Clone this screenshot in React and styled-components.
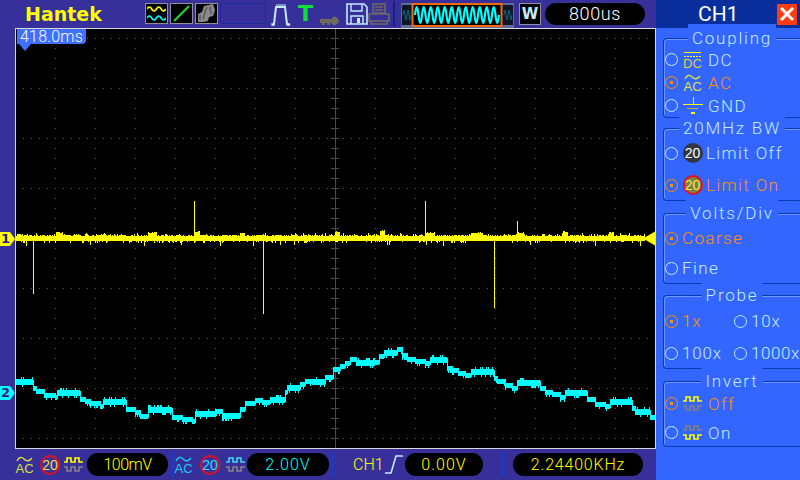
import styled, { createGlobalStyle } from "styled-components";

const YELLOW = "#ffff00";
const CYAN = "#00ffff";
const ORANGE = "#ff9000";
const LIGHT = "#c4ecff";

const GlobalStyle = createGlobalStyle`
  html, body { margin: 0; padding: 0; background: #000; }
  body { width: 800px; height: 480px; overflow: hidden; }
`;

// small seeded random so the noise stays the same on each run
const makeRand = (seed) => () => {
  seed = (seed * 1103515245 + 12345) & 0x7fffffff;
  return seed / 0x7fffffff;
};

const SPIKES = [
  [33, 240, 294],
  [194, 201, 237],
  [263, 240, 314],
  [425, 201, 237],
  [494, 240, 308],
  [517, 221, 237],
];
const BUMPS = [[56, 62, 232], [103, 105, 233], [148, 156, 232], [194, 199, 231], [240, 244, 232], [335, 339, 231], [380, 384, 230], [425, 434, 232], [471, 482, 232], [517, 523, 232], [563, 567, 231], [609, 613, 232]];

const yellowPath = () => {
  const rand = makeRand(7);
  let d = "";
  for (let x = 16; x < 645; x++) {
    let top = 235 + Math.floor(rand() * 2);
    let bottom = 241;
    const r = rand();
    if (r > 0.82) top -= 1 + Math.floor(rand() * 2);
    if (r < 0.22) bottom += 1 + Math.floor(rand() * 2);
    if (r < 0.03) bottom += 3;
    BUMPS.forEach(([a, b, y]) => {
      if (x >= a && x <= b) top = Math.min(top, y + Math.floor(rand() * 2));
    });
    d += `M${x} ${top}h1V${bottom}h-1z`;
  }
  return d;
};

const CYAN_STEPS = [
  [33, 382], [36, 388], [44, 391], [55, 395], [57, 397], [80, 393], [85, 399], [90, 401], [100, 403], [103, 406],
  [126, 402], [135, 409], [140, 412], [148, 416], [172, 410], [182, 417], [192, 419], [195, 421], [216, 414], [222, 411],
  [240, 416], [245, 409], [255, 403], [262, 400], [270, 402], [285, 400], [287, 392], [300, 388], [305, 384], [312, 381],
  [325, 382], [333, 377], [340, 369], [345, 366], [350, 363], [356, 359], [375, 363], [379, 362], [384, 356], [397, 353],
  [402, 349], [407, 355], [415, 359], [425, 361], [430, 363], [447, 360], [452, 368], [458, 370], [465, 373], [471, 375],
  [494, 372], [497, 378], [505, 381], [512, 385], [517, 388], [540, 383], [545, 388], [552, 392], [560, 394], [565, 397],
  [587, 393], [595, 399], [605, 404], [610, 406], [632, 402], [635, 408], [650, 412], [655, 417],
];

const cyanPath = () => {
  const rand = makeRand(21);
  let d = "";
  let from = 16;
  let prev = CYAN_STEPS[0][1];
  CYAN_STEPS.forEach(([end, y]) => {
    const wide = end - from > 12;
    for (let x = from; x < end; x++) {
      let top = y - (wide ? 3 : 2);
      let bottom = y + 3;
      const r = rand();
      if (wide && r > 0.8) top -= 2;
      if (r < 0.18) bottom += 2;
      // first column of a step joins up with the level before it
      if (x === from) {
        top = Math.min(top, prev - 2);
        bottom = Math.max(bottom, prev + 2);
      }
      d += `M${x} ${top}h1V${bottom}h-1z`;
    }
    from = end;
    prev = y;
  });
  return d;
};

const gridDots = () => {
  let d = "";
  for (let x = 55; x < 655; x += 40) {
    for (let y = 38; y < 448; y += 10) d += `M${x} ${y}h1v1h-1z`;
  }
  for (let y = 38; y < 448; y += 50) {
    for (let x = 23; x < 655; x += 8) d += `M${x} ${y}h1v1h-1z`;
  }
  return d;
};

const crossTicks = () => {
  let d = "M335 29V448";
  for (let y = 38; y < 448; y += 10) d += `M331 ${y}H339`;
  return d;
};

const Waveforms = () => (
  <svg width="639" height="419" viewBox="16 29 639 419" shapeRendering="crispEdges" style={{ display: "block" }}>
    <path d={gridDots()} fill="#555" />
    <path d={crossTicks()} stroke="#4a4a4a" strokeWidth="1" fill="none" />
    <path d={yellowPath()} fill={YELLOW} />
    {SPIKES.map(([x, y1, y2]) => (
      <rect key={x} x={x} y={y1} width="1" height={y2 - y1} fill={YELLOW} />
    ))}
    <path d={cyanPath()} fill={CYAN} />
    <polygon points="643,238.5 655,231.5 655,245.5" fill={YELLOW} shapeRendering="auto" />
  </svg>
);

const WaveTile = () => (
  <svg width="19" height="17" viewBox="0 0 19 17">
    <path d="M0 4q2.4-4 4.7 0t4.7 0 4.7 0 4.7 0" stroke={YELLOW} strokeWidth="1.6" fill="none" />
    <path d="M0 13q2.4-4 4.7 0t4.7 0 4.7 0 4.7 0" stroke={CYAN} strokeWidth="1.6" fill="none" />
  </svg>
);

const XYTile = () => (
  <svg width="19" height="17" viewBox="0 0 19 17">
    <path d="M2 16L17 1" stroke="#12e030" strokeWidth="2" fill="none" />
  </svg>
);

const PersistTile = () => (
  <svg width="19" height="19" viewBox="0 0 19 19">
    <path d="M1 18V10l4-2 2-6 9-2 2 6-2 6-4 1-1 4-5 1z" fill="#8a8a8a" />
    <path d="M6 15l2-7 2-5M13 3l1 7M3 11v5" stroke="#5a5a5a" strokeWidth="1.5" fill="none" />
  </svg>
);

const PulseIcon = () => (
  <svg width="21" height="23" viewBox="0 0 21 23" fill="none">
    <path d="M1 22l2-1 2-17h9l2 17 3 1" stroke={LIGHT} strokeWidth="2" />
    <path d="M6 1v4M8 1v4M10 1v4M12 1v4M14 1v4M1 20v3M3 20v3M16 20v3M18 20v3" stroke={LIGHT} strokeWidth="1" />
  </svg>
);

const KeyIcon = () => (
  <svg width="22" height="10" viewBox="0 0 22 10" fill="#6f6a60">
    <path d="M0 3h12v-1a4 4 0 1 1 0 6v-1h-2v2h-3v-2h-2v2h-3v-2h-2z" />
  </svg>
);

const SaveIcon = () => (
  <svg width="22" height="22" viewBox="0 0 22 22" fill="none">
    <path d="M1 1h17l3 3v17H1z" stroke={LIGHT} strokeWidth="1.6" />
    <path d="M5 1v7h11V1" stroke={LIGHT} strokeWidth="1.4" />
    <path d="M5 21v-8h12v8" stroke={LIGHT} strokeWidth="1.4" />
    <rect x="11" y="15" width="3" height="5" fill={LIGHT} />
  </svg>
);

const PrintIcon = () => (
  <svg width="22" height="22" viewBox="0 0 22 22" fill="none" stroke="#6f6a60" strokeWidth="1.6">
    <path d="M5 1h12v9H5zM7 4h8M7 7h8" />
    <path d="M1 11h20v7H1zM3 18v3h16v-3" />
  </svg>
);

const zigzag = (x0, x1, h, step) => {
  let d = `M${x0} 11`;
  for (let x = x0; x < x1; x += step) {
    d += `q${step / 4} ${-h} ${step / 2} 0t${step / 2} 0`;
  }
  return d;
};

const TimeBar = () => (
  <svg width="113" height="26" viewBox="0 0 113 26" fill="none">
    <rect x="0.5" y="1.5" width="112" height="22" rx="2" fill="#0d1526" stroke="#5f6a98" />
    <rect y="0" x="0" width="113" height="2" fill="#5f6a98" />
    <rect y="22" x="0" width="113" height="3" fill="#5f6a98" />
    <path d={zigzag(2, 10, 10, 4)} stroke="#0d6a78" strokeWidth="1" transform="translate(0 1)" />
    <path d={zigzag(103, 111, 10, 4)} stroke="#0d6a78" strokeWidth="1" transform="translate(0 1)" />
    <rect x="11.5" y="1" width="89" height="22" fill="#000" stroke="#f26a10" strokeWidth="2" />
    <path d={zigzag(14, 98, 16, 7)} stroke={CYAN} strokeWidth="2.2" transform="translate(0 1)" />
  </svg>
);

const AcIcon = ({ color }) => (
  <IconStack>
    <svg width="17" height="7" viewBox="0 0 17 7" fill="none">
      <path d="M1 5q3-6 7-2t8-1" stroke={color} strokeWidth="1.4" />
    </svg>
    <IconLabel $color={color}>AC</IconLabel>
  </IconStack>
);

const DcIcon = () => (
  <IconStack>
    <svg width="17" height="7" viewBox="0 0 17 7" fill="none" shapeRendering="crispEdges">
      <path d="M0 1.5H17" stroke={YELLOW} />
      <path d="M0 5H17" stroke={YELLOW} strokeDasharray="2 1" />
    </svg>
    <IconLabel $color="#d8d040">DC</IconLabel>
  </IconStack>
);

const GndIcon = () => (
  <svg width="20" height="18" viewBox="0 0 20 18" fill="none" shapeRendering="crispEdges">
    <path d="M10 0V7M0 7.5H20" stroke={YELLOW} strokeWidth="1" />
    <path d="M4 11.5H15" stroke="#c8b040" />
    <rect x="8" y="15" width="4" height="2" fill={YELLOW} />
  </svg>
);

const SquareWave = ({ top, bottom }) => (
  <svg width="19" height="17" viewBox="0 0 19 17" fill="none" style={{ display: "block" }}>
    <path d="M0 6h3V2h4v4h4V2h4v4h4" stroke={top} strokeWidth="1.6" />
    <path d="M0 11h3v4h4v-4h4v4h4v-4h4" stroke={bottom} strokeWidth="1.6" />
  </svg>
);

const EdgeIcon = () => (
  <svg width="18" height="21" viewBox="0 0 18 21" fill="none" style={{ display: "block" }}>
    <path d="M0 19H6L11 2H18" stroke={LIGHT} strokeWidth="1.6" />
  </svg>
);

const CursorLabel = () => (
  <CursorTab>
    <CursorText>418.0ms</CursorText>
    <CursorPoint />
  </CursorTab>
);

const Radio = ({ selected, label, icon, gap, spacing }) => (
  <Option>
    <RadioDot $selected={selected} />
    {icon}
    <OptionText $selected={selected} $gap={gap} $spacing={spacing}>{label}</OptionText>
  </Option>
);

export default function App() {
  return (
    <Root>
      <GlobalStyle />
      <Main>
        <TopBar>
          <Logo>Hantek</Logo>
          <Tools>
            <Tile><WaveTile /></Tile>
            <Tile><XYTile /></Tile>
            <Tile><PersistTile /></Tile>
            <BlankFrame />
            <PulseSlot><PulseIcon /></PulseSlot>
            <TriggerT>T</TriggerT>
            <KeySlot><KeyIcon /></KeySlot>
            <SaveIcon />
            <PrintIcon />
            <Divider />
            <TimeSlot><TimeBar /></TimeSlot>
            <LetterTile>W</LetterTile>
            <Pill $width={100} $height={22} $size={18} $spacing={0.6} $color="#fff">800us</Pill>
          </Tools>
        </TopBar>
        <Middle>
          <Gutter>
            <ChannelTag $top={204} $color={YELLOW}>1</ChannelTag>
            <ChannelTag $top={358} $color={CYAN}>2</ChannelTag>
          </Gutter>
          <Screen>
            <Waveforms />
            <CursorLabel />
          </Screen>
        </Middle>
        <BottomBar>
          <BarSlot $left={0}><AcIcon color="#d8e040" /></BarSlot>
          <BarSlot $left={7}><Badge $ring="#e01020" $fill="#3a2f9b" $color="#e8e050">20</Badge></BarSlot>
          <BarSlot $left={4}><SquareWave top={YELLOW} bottom="#8a8088" /></BarSlot>
          <BarSlot $left={4}><Pill $width={81} $height={23} $spacing={-0.5} $color={YELLOW}>100mV</Pill></BarSlot>
          <BarDivider $left={4} />
          <BarSlot $left={2}><AcIcon color="#20c8f0" /></BarSlot>
          <BarSlot $left={8}><Badge $ring="#e01020" $fill="#3a2f9b" $color="#20e0ff">20</Badge></BarSlot>
          <BarSlot $left={6}><SquareWave top="#40d8f0" bottom="#8a8088" /></BarSlot>
          <BarSlot $left={2}><Pill $width={82} $height={23} $color={CYAN}>2.00V</Pill></BarSlot>
          <BarDivider $left={3} />
          <ChannelName>CH1</ChannelName>
          <BarSlot $left={4}><EdgeIcon /></BarSlot>
          <BarSlot $left={2}><Pill $width={78} $height={23} $color={YELLOW}>0.00V</Pill></BarSlot>
          <BarDivider $left={19} />
          <BarSlot $left={10}><Pill $width={130} $height={23} $spacing={0.8} $color={YELLOW}>2.24400KHz</Pill></BarSlot>
        </BottomBar>
      </Main>
      <Panel>
        <PanelHeader>
          <PanelTitle>CH1</PanelTitle>
          <CloseBox>
            <svg width="14" height="14" viewBox="0 0 14 14">
              <path d="M1 1L13 13M13 1L1 13" stroke="#fff" strokeWidth="3" />
            </svg>
          </CloseBox>
        </PanelHeader>
        <Group $top={10} $height={80} $pad={9} $row={23}>
          <GroupTitle>Coupling</GroupTitle>
          <Radio label="DC" icon={<IconBox><DcIcon /></IconBox>} />
          <Radio selected label="AC" icon={<IconBox><AcIcon color="#e0e040" /></IconBox>} />
          <Radio label="GND" icon={<IconBox><GndIcon /></IconBox>} />
        </Group>
        <Group $top={10} $height={73} $pad={8} $row={32}>
          <GroupTitle>20MHz BW</GroupTitle>
          <Radio label="Limit Off" gap={3} icon={<IconBox><Badge $ring="#33363f" $fill="#33363f" $color="#fff">20</Badge></IconBox>} />
          <Radio selected label="Limit On" gap={3} icon={<IconBox><Badge $ring="#e01020" $fill="#808040" $color="#f0e850">20</Badge></IconBox>} />
        </Group>
        <Group $top={12} $height={71} $pad={9} $row={30}>
          <GroupTitle>Volts/Div</GroupTitle>
          <Radio selected label="Coarse" gap={4} />
          <Radio label="Fine" gap={4} />
        </Group>
        <Group $top={11} $height={74} $pad={9} $row={32}>
          <GroupTitle>Probe</GroupTitle>
          <ProbeGrid>
            <Radio selected label="1x" gap={4} spacing={0.8} />
            <Radio label="10x" gap={4} spacing={0.8} />
            <Radio label="100x" gap={4} spacing={0.8} />
            <Radio label="1000x" gap={4} spacing={0.6} />
          </ProbeGrid>
        </Group>
        <Group $top={12} $height={66} $pad={7} $row={29}>
          <GroupTitle>Invert</GroupTitle>
          <Radio selected label="Off" icon={<IconBox><SquareWave top={YELLOW} bottom="#8a8078" /></IconBox>} />
          <Radio label="On" icon={<IconBox><SquareWave top="#8a8078" bottom={YELLOW} /></IconBox>} />
        </Group>
      </Panel>
    </Root>
  );
}

const FONT = `Roboto, "Liberation Sans", sans-serif`;

const Root = styled.div`
  display: grid;
  grid-template-columns: 656px 144px;
  width: 800px;
  height: 480px;
  background: #38309a;
  font-family: ${FONT};
  font-weight: 300;
`;

const Main = styled.div`
  display: flex;
  flex-direction: column;
  height: 480px;
`;

const TopBar = styled.div`
  display: flex;
  align-items: flex-start;
  height: 28px;
  box-sizing: border-box;
  padding: 3px 8px 0 25px;
`;

const Logo = styled.div`
  width: 120px;
  height: 20px;
  font-family: "DejaVu Sans", sans-serif;
  font-weight: 700;
  font-size: 19px;
  line-height: 22px;
  color: ${YELLOW};
`;

const Tools = styled.div`
  display: flex;
  align-items: flex-start;
`;

const Tile = styled.div`
  display: flex;
  align-items: center;
  justify-content: center;
  width: 23px;
  height: 21px;
  margin-right: 2px;
  box-sizing: border-box;
  border: 1px solid #8f8f9e;
  background: #000;
`;

const BlankFrame = styled.div`
  width: 46px;
  height: 21px;
  box-sizing: border-box;
  border: 1px solid #1c2aa0;
  border-radius: 3px;
`;

const PulseSlot = styled.div`
  margin: 0 0 0 5px;
  width: 27px;
`;

const TriggerT = styled.div`
  width: 22px;
  font-family: "DejaVu Sans", sans-serif;
  font-weight: 700;
  font-size: 22px;
  line-height: 21px;
  color: #0ee03a;
`;

const KeySlot = styled.div`
  width: 26px;
  padding-top: 8px;
`;

const Divider = styled.div`
  width: 2px;
  height: 25px;
  margin: -2px 6px 0 3px;
  background: #12207e;
`;

const TimeSlot = styled.div`
  width: 118px;
`;

const LetterTile = styled.div`
  width: 22px;
  height: 22px;
  margin-right: 4px;
  box-sizing: border-box;
  border: 1px solid #8f8f9e;
  background: #000;
  color: ${LIGHT};
  font-family: "DejaVu Sans", sans-serif;
  font-weight: 700;
  font-size: 15px;
  line-height: 20px;
  text-align: center;
`;

const Pill = styled.div`
  width: ${(props) => props.$width}px;
  height: ${(props) => props.$height}px;
  flex: none;
  border-radius: 11px;
  background: #000;
  color: ${(props) => props.$color};
  font-size: ${(props) => props.$size ?? 16}px;
  letter-spacing: ${(props) => props.$spacing ?? 1}px;
  line-height: ${(props) => props.$height}px;
  text-align: center;
`;

const Middle = styled.div`
  display: flex;
  height: 421px;
`;

const Gutter = styled.div`
  position: relative;
  width: 15px;
  flex: none;
`;

const ChannelTag = styled.div`
  position: absolute;
  left: 0;
  top: ${(props) => props.$top}px;
  width: 15px;
  height: 14px;
  background: ${(props) => props.$color};
  clip-path: polygon(0 0, 66% 0, 100% 50%, 66% 100%, 0 100%);
  color: #28208a;
  font-family: "DejaVu Sans", sans-serif;
  font-weight: 700;
  font-size: 13px;
  line-height: 14px;
  padding-left: 1px;
  box-sizing: border-box;
`;

const Screen = styled.div`
  position: relative;
  width: 641px;
  height: 421px;
  box-sizing: border-box;
  border: 1px solid #d8d8d8;
  background: #000;
`;

const CursorTab = styled.div`
  position: absolute;
  left: 1px;
  top: 0;
`;

const CursorText = styled.div`
  width: 69px;
  height: 15px;
  background: #4070ff;
  border-radius: 0 0 4px 0;
  color: #fff;
  font-size: 16px;
  line-height: 15px;
  letter-spacing: 0.2px;
  text-align: center;
`;

const CursorPoint = styled.div`
  width: 0;
  height: 0;
  margin-left: 2px;
  border-left: 6px solid transparent;
  border-right: 6px solid transparent;
  border-top: 7px solid #4070ff;
`;

const BottomBar = styled.div`
  display: flex;
  align-items: center;
  height: 31px;
  box-sizing: border-box;
  padding-left: 16px;
`;

const BarSlot = styled.div`
  margin-left: ${(props) => props.$left}px;
  flex: none;
`;

const IconStack = styled.div`
  display: flex;
  flex-direction: column;
  align-items: center;
  width: 17px;
  height: 18px;
`;

const IconLabel = styled.div`
  font-family: "Liberation Sans", sans-serif;
  font-weight: 400;
  font-size: 13px;
  line-height: 11px;
  color: ${(props) => props.$color};
`;

const Badge = styled.div`
  width: 20px;
  height: 20px;
  box-sizing: border-box;
  flex: none;
  border: 2px solid ${(props) => props.$ring};
  border-radius: 50%;
  background: ${(props) => props.$fill};
  color: ${(props) => props.$color};
  font-family: "Liberation Sans", sans-serif;
  font-weight: 400;
  font-size: 14px;
  line-height: 16px;
  text-align: center;
`;

const BarDivider = styled.div`
  width: 1px;
  height: 25px;
  flex: none;
  margin-left: ${(props) => props.$left}px;
  background: #1440d8;
`;

const ChannelName = styled.div`
  width: 28px;
  margin-left: 20px;
  flex: none;
  color: ${YELLOW};
  font-size: 16px;
`;

const Panel = styled.div`
  display: flex;
  flex-direction: column;
  height: 480px;
  background: #3366ff;
`;

const PanelHeader = styled.div`
  display: flex;
  align-items: center;
  height: 28px;
  flex: none;
  padding-left: 42px;
  background: #0a2f9c;
`;

const PanelTitle = styled.div`
  width: 79px;
  color: #fff;
  font-weight: 400;
  font-size: 21px;
`;

const CloseBox = styled.div`
  display: flex;
  align-items: center;
  justify-content: center;
  width: 20px;
  height: 21px;
  background: #ff3b10;
`;

const Group = styled.div`
  position: relative;
  display: flex;
  flex-direction: column;
  height: ${(props) => props.$height}px;
  margin: ${(props) => props.$top}px 0 0 7px;
  padding-top: ${(props) => props.$pad}px;
  box-sizing: border-box;
  border: solid #0b3ab0;
  border-width: 1px 0 1px 1px;
  border-radius: 4px 0 0 4px;
  box-shadow: inset 1px 1px 0 #6f96ff;

  & > div:not(:first-child) {
    flex: 0 0 ${(props) => props.$row}px;
  }
`;

const GroupTitle = styled.div`
  position: absolute;
  top: -9px;
  left: 0;
  right: 0;
  height: 17px;
  text-align: center;
  color: ${LIGHT};
  font-size: 17px;
  line-height: 17px;
  letter-spacing: 1.8px;

  &::first-line {
    background: #3366ff;
    box-shadow: 0 0 0 4px #3366ff;
  }
`;

const Option = styled.div`
  display: flex;
  align-items: center;
  padding-left: 1px;
  min-width: 0;
`;

const RadioDot = styled.div`
  position: relative;
  width: 13px;
  height: 13px;
  flex: none;
  box-sizing: border-box;
  border: 1px solid ${(props) => (props.$selected ? ORANGE : LIGHT)};
  border-radius: 50%;

  &::after {
    content: "";
    display: ${(props) => (props.$selected ? "block" : "none")};
    position: absolute;
    left: 4px;
    top: 4px;
    width: 3px;
    height: 3px;
    background: ${ORANGE};
  }
`;

const IconBox = styled.div`
  display: flex;
  justify-content: center;
  width: 21px;
  margin-left: 4px;
  flex: none;
`;

const OptionText = styled.div`
  margin-left: ${(props) => props.$gap ?? 5}px;
  color: ${(props) => (props.$selected ? ORANGE : LIGHT)};
  font-size: 17px;
  letter-spacing: ${(props) => props.$spacing ?? 1.4}px;
  white-space: nowrap;
`;

const ProbeGrid = styled.div`
  display: grid;
  grid-template-columns: 69px 69px;
  grid-auto-rows: 32px;
`;
